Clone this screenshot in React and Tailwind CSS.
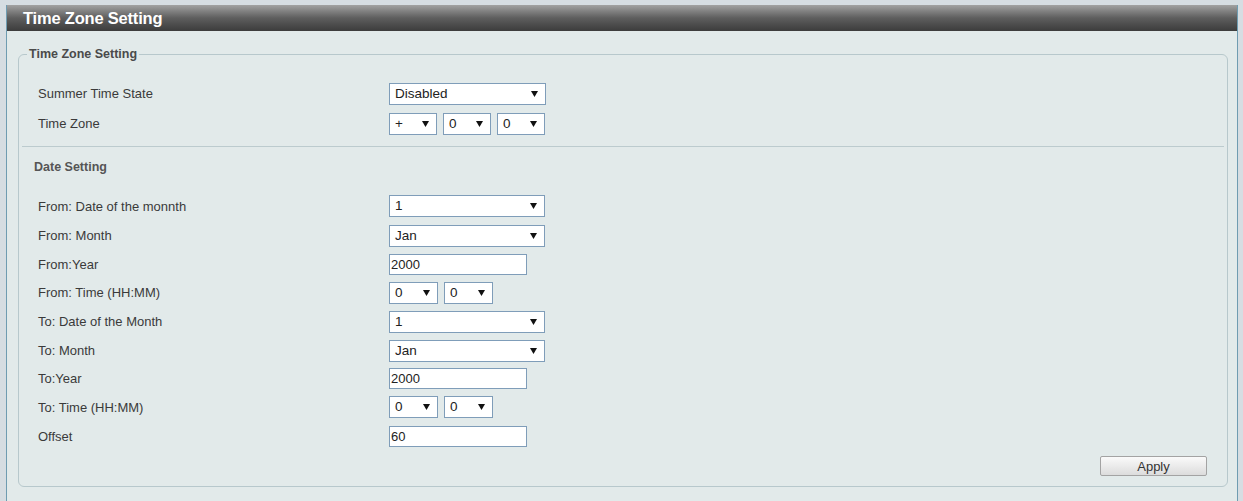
import React from 'react';

function Arrow() {
    return (
        <svg width="7" height="6" viewBox="0 0 7 6" className="shrink-0">
            <polygon points="0,0 7,0 3.5,6" fill="#111" />
        </svg>
    );
}

function Select({ value, width }) {
    return (
        <div className={`${width} h-[22px] border border-[#7f9db9] bg-white pl-[5px] pr-[7px] flex items-center justify-between text-[13.5px] text-[#222]`}>
            <span>{value}</span>
            <Arrow />
        </div>
    );
}

function TextBox({ value }) {
    return (
        <div className="w-[138px] h-[21px] border border-[#7f9db9] bg-white pl-[1px] flex items-center text-[13px] text-[#222]">
            {value}
        </div>
    );
}

function Row({ label, height, children }) {
    return (
        <div className={`flex items-center ${height}`}>
            <div className="w-[351px] text-[13px] text-[#3a3a3a]">{label}</div>
            <div className="flex items-center gap-[6px]">{children}</div>
        </div>
    );
}

export default function App() {
    const timeSelects = (
        <>
            <Select value="0" width="w-[49px]" />
            <Select value="0" width="w-[49px]" />
        </>
    );

    const dateRows = [
        { label: 'From: Date of the monnth', h: 'h-[29px]', el: <Select value="1" width="w-[156px]" /> },
        { label: 'From: Month', h: 'h-[30px]', el: <Select value="Jan" width="w-[156px]" /> },
        { label: 'From:Year', h: 'h-[28px]', el: <TextBox value="2000" /> },
        { label: 'From: Time (HH:MM)', h: 'h-[28px]', el: timeSelects },
        { label: 'To: Date of the Month', h: 'h-[30px]', el: <Select value="1" width="w-[156px]" /> },
        { label: 'To: Month', h: 'h-[28px]', el: <Select value="Jan" width="w-[156px]" /> },
        { label: 'To:Year', h: 'h-[28px]', el: <TextBox value="2000" /> },
        { label: 'To: Time (HH:MM)', h: 'h-[29px]', el: timeSelects },
        { label: 'Offset', h: 'h-[29px]', el: <TextBox value="60" /> },
    ];

    return (
        <div className="min-h-[501px] bg-[#d6dde2] pt-[5px] pl-[6px] pr-[5px] font-['Liberation_Sans',Arial,sans-serif]">
            <div className="min-h-[496px] border-x border-[#6f9cb1] bg-[#e2eaea]">
                <div className="h-[26px] bg-gradient-to-b from-[#a2a2a2] via-[#5e5e5e] to-[#3c3c3c] pl-[16px] flex items-center text-white font-bold text-[16.5px] tracking-[-0.2px]">
                    Time Zone Setting
                </div>
                <div className="pt-[14px] pl-[11px] pr-[9px]">
                    <fieldset className="border border-[#b7c8cc] rounded-[6px] pb-[10px]">
                        <legend className="ml-[8px] px-[2px] text-[12.5px] font-bold text-[#4a4a4a]">
                            Time Zone Setting
                        </legend>
                        <div className="pt-[15px] pl-[19px]">
                            <Row label="Summer Time State" height="h-[30px]">
                                <Select value="Disabled" width="w-[157px]" />
                            </Row>
                            <Row label="Time Zone" height="h-[30px]">
                                <Select value="+" width="w-[48px]" />
                                <Select value="0" width="w-[48px]" />
                                <Select value="0" width="w-[48px]" />
                            </Row>
                        </div>
                        <div className="mt-[7px] mx-[3px] border-t border-[#bccbce]" />
                        <div className="mt-[13px] pl-[15px] text-[12.5px] font-bold text-[#555] leading-[15px]">
                            Date Setting
                        </div>
                        <div className="mt-[17px] pl-[19px]">
                            {dateRows.map((row, index) => (
                                <Row key={`row${index}`} label={row.label} height={row.h}>
                                    {row.el}
                                </Row>
                            ))}
                        </div>
                        <div className="flex justify-end pr-[20px] mt-[5px]">
                            <button className="w-[107px] h-[20px] border border-[#a3a3a3] rounded-[2px] bg-gradient-to-b from-[#fafafa] to-[#dcdcdc] text-[13px] text-[#333]">
                                Apply
                            </button>
                        </div>
                    </fieldset>
                </div>
            </div>
        </div>
    );
}
